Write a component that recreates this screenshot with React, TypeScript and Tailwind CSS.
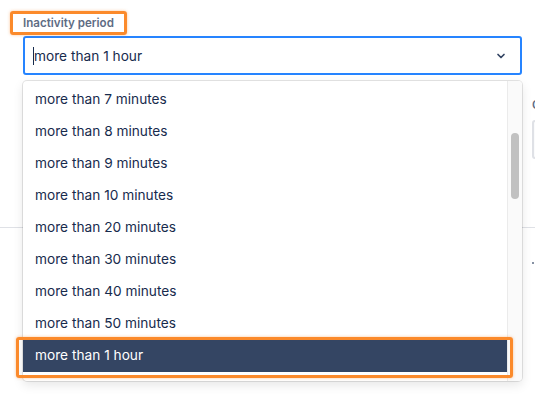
import { ChevronDown } from "lucide-react";

const options = [
  "more than 7 minutes",
  "more than 8 minutes",
  "more than 9 minutes",
  "more than 10 minutes",
  "more than 20 minutes",
  "more than 30 minutes",
  "more than 40 minutes",
  "more than 50 minutes",
  "more than 1 hour",
];

export default function App() {
  const selected = "more than 1 hour";

  return (
    <div className="relative w-[535px] h-[398px] overflow-hidden bg-white font-['Inter',sans-serif] text-[#172b4d]">
      <div className="pt-[9px] pl-[10px]">
        {/* field label, highlighted */}
        <div className="inline-flex h-[24px] items-center rounded-[3px] border-[3px] border-[#fb8a2b] px-[10px] shadow-[0_0_3px_rgba(251,138,43,0.5)]">
          <span className="text-[11.6px] font-semibold leading-4 text-[#5e6c84]">Inactivity period</span>
        </div>

        {/* select control */}
        <div className="ml-[13px] mt-[1px] flex h-[39px] w-[499px] items-center rounded-[3px] border-2 border-[#2684ff] pl-[8px] pr-[13px]">
          <span className="h-[18px] w-px bg-[#172b4d]" />
          <span className="flex-1 text-[13.7px] leading-5">more than 1 hour</span>
          <ChevronDown className="h-[12px] w-[12px] text-[#344563]" strokeWidth={3.4} />
        </div>

        {/* content behind the menu */}
        <div className="mt-[22px] flex">
          <div className="w-[512px] shrink-0" />
          <div className="ml-[10px] w-[200px] shrink-0">
            <div className="text-[11.6px] font-semibold leading-4 text-[#5e6c84]">Custom period</div>
            <div className="mt-[7px] h-[39px] rounded-[3px] border-2 border-[#dfe1e6] bg-[#fafbfc]" />
          </div>
        </div>
      </div>
      <div className="mt-[68px] h-px w-full bg-[#dfe1e6]" />
      <div className="ml-[532px] mt-[34px] h-[2px] w-[2px] rounded-full bg-[#5e6c84]" />

      {/* open dropdown menu */}
      <div className="absolute left-[23px] top-[81px] flex h-[300px] w-[499px] overflow-hidden rounded-[4px] bg-white shadow-[0_0_0_1px_rgba(0,0,0,0.1),0_4px_11px_rgba(0,0,0,0.1)]">
        <div className="flex-1 pt-[3px]">
          {options.map((o) => (
            <div
              key={o}
              className={
                o === selected
                  ? "flex h-[32px] items-center bg-[#344563] px-[12px] pb-px text-[13.7px] text-white"
                  : "flex h-[32px] items-center px-[12px] pb-px text-[13.7px] text-[#172b4d]"
              }
            >
              {o}
            </div>
          ))}
        </div>
        <div className="w-[15px] border-l border-[#ebebeb] bg-[#fafafa]">
          <div className="mx-auto mt-[52px] h-[66px] w-[8px] rounded-full bg-[#c1c1c1]" />
        </div>
      </div>

      {/* highlight around the selected option */}
      <div className="absolute left-[16px] top-[337px] h-[41px] w-[497px] rounded-[3px] border-[3px] border-[#fb8a2b] shadow-[0_0_3px_rgba(251,138,43,0.5)]" />
    </div>
  );
}
